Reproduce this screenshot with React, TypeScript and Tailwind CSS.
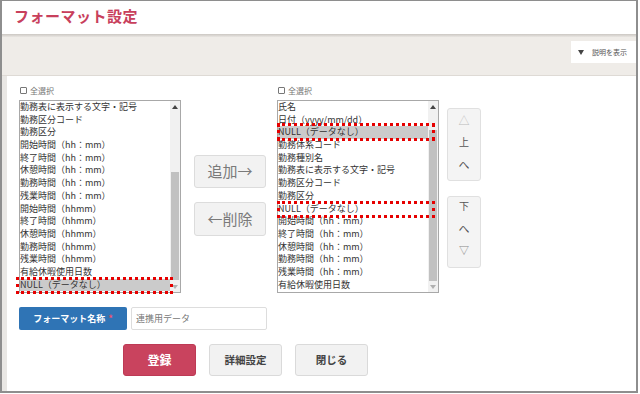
import React from 'react';

const leftItems = [
  '勤務表に表示する文字・記号',
  '勤務区分コード',
  '勤務区分',
  '開始時間（hh：mm）',
  '終了時間（hh：mm）',
  '休憩時間（hh：mm）',
  '勤務時間（hh：mm）',
  '残業時間（hh：mm）',
  '開始時間（hhmm）',
  '終了時間（hhmm）',
  '休憩時間（hhmm）',
  '勤務時間（hhmm）',
  '残業時間（hhmm）',
  '有給休暇使用日数',
  'NULL（データなし）',
];

const rightItems = [
  '氏名',
  '日付（yyyy/mm/dd）',
  'NULL（データなし）',
  '勤務体系コード',
  '勤務種別名',
  '勤務表に表示する文字・記号',
  '勤務区分コード',
  '勤務区分',
  'NULL（データなし）',
  '開始時間（hh：mm）',
  '終了時間（hh：mm）',
  '休憩時間（hh：mm）',
  '勤務時間（hh：mm）',
  '残業時間（hh：mm）',
  '有給休暇使用日数',
];

type Mark = { left: number; top: number; width: number; height: number };

function Arrow({ up, light }: { up?: boolean; light?: boolean }) {
  return (
    <svg width="6" height="4" viewBox="0 0 6 4">
      <path d={up ? 'M0 4 L3 0 L6 4Z' : 'M0 0 L3 4 L6 0Z'} fill={light ? '#b0b0b0' : '#444'} />
    </svg>
  );
}

function CheckAll() {
  return (
    <div className="flex items-center gap-[3px] h-[13px] mb-[3px] pl-[1px] text-[8px] text-[#777]">
      <span className="w-[7px] h-[7px] border border-[#777] rounded-[1px] bg-white" />
      <span>全選択</span>
    </div>
  );
}

function ListBox({
  items,
  selected,
  gap,
  thumb,
  marks,
}: {
  items: string[];
  selected: number;
  gap: number;
  thumb: number;
  marks: Mark[];
}) {
  return (
    <div className="relative flex h-[193px] w-[162px] border border-[#a8a8a8] bg-white">
      <div className="flex-1 overflow-hidden">
        {items.map((t, i) => (
          <div
            key={i}
            className={`h-[12.7px] leading-[12.7px] text-[9px] text-[#333] whitespace-nowrap ${
              selected === i ? 'bg-[#cbcbcb]' : ''
            }`}
          >
            {t}
          </div>
        ))}
      </div>
      <div className="flex w-[10px] flex-col bg-[#f1f1f1]">
        <div className="flex h-[11px] items-center justify-center">
          <Arrow up />
        </div>
        <div style={{ height: gap }} />
        <div className="mx-[1px] bg-[#c1c1c1]" style={{ height: thumb }} />
        <div className="flex-1" />
        <div className="flex h-[11px] items-center justify-center">
          <Arrow light />
        </div>
      </div>
      {marks.map((m, i) => (
        <div
          key={i}
          className="absolute border-[3px] border-dotted border-[#e60000]"
          style={{ left: m.left, top: m.top, width: m.width, height: m.height }}
        />
      ))}
    </div>
  );
}

export default function App() {
  return (
    <div className="w-[640px] h-[394px] bg-white font-['Noto_Sans_CJK_JP','Noto_Sans',sans-serif]">
      <div className="flex h-[393px] w-[638px] flex-col border-x-2 border-t border-b-2 border-[#8e8e8e]">
        {/* header */}
        <div className="flex h-[33px] items-center pl-[12px] pb-[2px] bg-white">
          <h1 className="text-[15px] font-bold text-[#c8405c] tracking-[0.5px]">フォーマット設定</h1>
        </div>
        <div className="h-[3px] bg-gradient-to-b from-[#cbc7c2] to-[#e9e6e2]" />
        <div className="flex h-[39px] justify-end bg-[#efece8] border-b border-[#dedad5]">
          <div className="mt-[4px] flex h-[22px] w-[65px] items-center gap-[8px] bg-white pl-[7px] text-[7px] text-[#555]">
            <svg width="6" height="5" viewBox="0 0 6 5">
              <path d="M0 0 L6 0 L3 5Z" fill="#444" />
            </svg>
            <span>説明を表示</span>
          </div>
        </div>

        {/* body */}
        <div className="flex flex-1 bg-[#e9e7e4] pl-[5px]">
          <div className="flex-1 bg-white pt-[8px]">
            <div className="flex items-start">
              <div className="ml-[12px] w-[162px]">
                <CheckAll />
                <ListBox
                  items={leftItems}
                  selected={14}
                  gap={60}
                  thumb={108}
                  marks={[{ left: -4, top: 176, width: 157, height: 17 }]}
                />
              </div>

              <div className="ml-[13px] flex w-[72px] flex-col gap-[14px] pt-[71px]">
                <button className="h-[33px] rounded-[3px] border border-[#dcdcdc] bg-[#f2f2f2] text-[15px] text-[#7a7a7a]">
                  追加→
                </button>
                <button className="h-[34px] rounded-[3px] border border-[#dcdcdc] bg-[#f2f2f2] text-[15px] text-[#7a7a7a]">
                  ←削除
                </button>
              </div>

              <div className="ml-[11px] w-[162px]">
                <CheckAll />
                <ListBox
                  items={rightItems}
                  selected={2}
                  gap={18}
                  thumb={151}
                  marks={[
                    { left: -1, top: 22, width: 158, height: 18 },
                    { left: -1, top: 100, width: 158, height: 17 },
                  ]}
                />
              </div>

              <div className="ml-[8px] flex w-[34px] flex-col gap-[15px] pt-[24px]">
                <button className="flex h-[73px] flex-col items-center rounded-[3px] border border-[#e0e0e0] bg-[#f4f4f4]">
                  <span className="h-[22px] leading-[22px] text-[11px] text-[#bbb]">△</span>
                  <span className="h-[22px] leading-[22px] text-[10px] text-[#555]">上</span>
                  <span className="h-[22px] leading-[22px] text-[11px] text-[#555]">へ</span>
                </button>
                <button className="flex h-[72px] flex-col items-center rounded-[3px] border border-[#e0e0e0] bg-[#f4f4f4]">
                  <span className="-mt-[2px] h-[22px] leading-[22px] text-[10px] text-[#555]">下</span>
                  <span className="h-[22px] leading-[22px] text-[11px] text-[#555]">へ</span>
                  <span className="h-[22px] leading-[22px] text-[10px] text-[#888]">▽</span>
                </button>
              </div>
            </div>

            {/* format name */}
            <div className="ml-[12px] mt-[14px] flex gap-[4px]">
              <div className="flex h-[23px] w-[108px] items-center justify-center gap-[3px] rounded-[2px] bg-[#2f74b5] text-[9px] font-bold text-white">
                <span>フォーマット名称</span>
                <span className="text-[#f0506a]">*</span>
              </div>
              <input
                className="h-[23px] w-[136px] rounded-[2px] border border-[#dddddd] px-[4px] text-[9px] text-[#333] placeholder:text-[#777] outline-none"
                placeholder="連携用データ"
              />
            </div>

            {/* actions */}
            <div className="ml-[116px] mt-[14px] flex gap-[13px]">
              <button className="h-[32px] w-[73px] rounded-[3px] border border-[#bd3a55] bg-[#c9435e] text-[12px] font-bold text-white">
                登録
              </button>
              <button className="h-[32px] w-[73px] rounded-[3px] border border-[#dadada] bg-[#f2f2f2] text-[10.5px] font-bold text-[#444]">
                詳細設定
              </button>
              <button className="h-[32px] w-[73px] rounded-[3px] border border-[#dadada] bg-[#f2f2f2] text-[10.5px] font-bold text-[#444]">
                閉じる
              </button>
            </div>
          </div>
        </div>
      </div>
    </div>
  );
}
